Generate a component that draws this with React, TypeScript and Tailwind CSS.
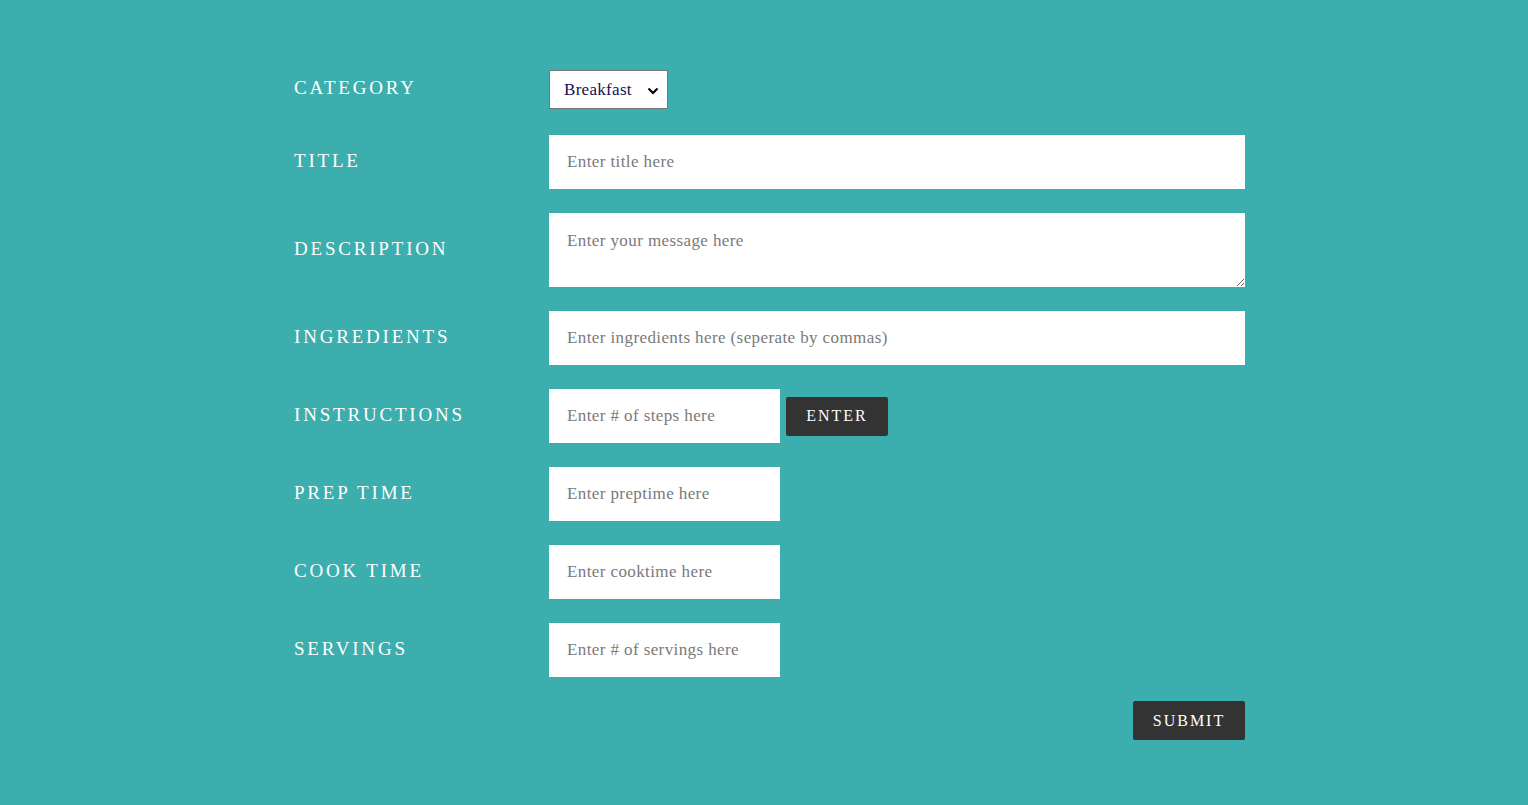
import React from "react";

const font = { fontFamily: '"Liberation Serif", "DejaVu Serif", serif' };

function Row({ label, children, h }: { label: string; children: React.ReactNode; h: string }) {
  return (
    <div className={`flex items-center ${h}`}>
      <div className="w-[255px] shrink-0 text-[19px] tracking-[2.8px] text-white -mt-[2px]">{label}</div>
      {children}
    </div>
  );
}

export default function App() {
  const inputCls =
    "h-[54px] bg-white px-[18px] text-[17px] tracking-[0.4px] text-black placeholder:text-[#7a7a7a] outline-none";
  return (
    <div className="min-h-[805px] w-full bg-[#3caead]" style={font}>
      <div className="pl-[294px] pt-[70px] w-[1245px] box-content flex flex-col">
        <Row label="CATEGORY" h="h-[39px]">
          <div className="relative h-[39px] w-[119px] border border-[#767676] bg-white">
            <span className="absolute left-[14px] top-[6px] text-[17px] tracking-[0.3px] text-[#10105a]">Breakfast</span>
            <svg className="absolute right-[8px] top-[15px]" width="12" height="10" viewBox="0 0 12 10">
              <path d="M1.5 2.5 L6 7 L10.5 2.5" stroke="#000" strokeWidth="2.2" fill="none" />
            </svg>
          </div>
        </Row>
        <div className="h-[26px]" />
        <Row label="TITLE" h="h-[54px]">
          <input className={`${inputCls} w-[696px]`} placeholder="Enter title here" style={font} />
        </Row>
        <div className="h-[24px]" />
        <Row label="DESCRIPTION" h="h-[74px]">
          <textarea
            className="h-[74px] w-[696px] bg-white px-[18px] pt-[15px] text-[17px] tracking-[0.4px] placeholder:text-[#7a7a7a] outline-none"
            placeholder="Enter your message here"
            style={font}
          />
        </Row>
        <div className="h-[24px]" />
        <Row label="INGREDIENTS" h="h-[54px]">
          <input
            className={`${inputCls} w-[696px]`}
            placeholder="Enter ingredients here (seperate by commas)"
            style={font}
          />
        </Row>
        <div className="h-[24px]" />
        <Row label="INSTRUCTIONS" h="h-[54px]">
          <input className={`${inputCls} w-[231px]`} placeholder="Enter # of steps here" style={font} />
          <button
            className="ml-[6px] h-[39px] w-[102px] rounded-[2px] bg-[#333333] text-[16px] tracking-[2px] text-white"
            style={font}
          >
            ENTER
          </button>
        </Row>
        <div className="h-[24px]" />
        <Row label="PREP TIME" h="h-[54px]">
          <input className={`${inputCls} w-[231px]`} placeholder="Enter preptime here" style={font} />
        </Row>
        <div className="h-[24px]" />
        <Row label="COOK TIME" h="h-[54px]">
          <input className={`${inputCls} w-[231px]`} placeholder="Enter cooktime here" style={font} />
        </Row>
        <div className="h-[24px]" />
        <Row label="SERVINGS" h="h-[54px]">
          <input className={`${inputCls} w-[231px]`} placeholder="Enter # of servings here" style={font} />
        </Row>
        <div className="h-[24px]" />
        <div className="flex justify-end w-[951px]">
          <button
            className="h-[39px] w-[112px] rounded-[2px] bg-[#333333] text-[16px] tracking-[2px] text-white"
            style={font}
          >
            SUBMIT
          </button>
        </div>
      </div>
    </div>
  );
}
